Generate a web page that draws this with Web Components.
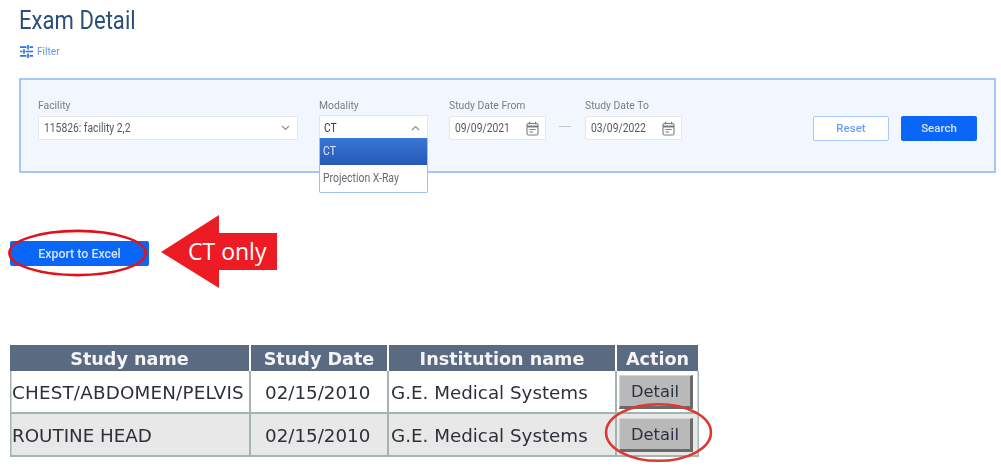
<!DOCTYPE html>
<html>
<head>
<meta charset="utf-8">
<title>Exam Detail</title>
<style>
  html, body { margin: 0; background: #fff; }
  body { width: 1001px; height: 468px; overflow: hidden; font-family: Roboto, "Liberation Sans", sans-serif; }
</style>
</head>
<body>
<exam-page>
  <page-title slot="head">Exam Detail</page-title>
  <filter-toggle slot="head">Filter</filter-toggle>

  <filter-panel slot="filter">
    <select-field label="Facility" value="115826: facility 2,2" style="--w:260px"></select-field>
    <select-field label="Modality" value="CT" open style="--w:109px;--ml:21px">
      <option-item selected>CT</option-item>
      <option-item>Projection X-Ray</option-item>
    </select-field>
    <date-field label="Study Date From" value="09/09/2021" style="--ml:21px"></date-field>
    <date-field label="Study Date To" value="03/09/2022" dash style="--ml:39px"></date-field>
    <app-button slot="actions" kind="outline">Reset</app-button>
    <app-button slot="actions" kind="solid">Search</app-button>
  </filter-panel>

  <export-row slot="export">
    <ring-mark style="--t:-11px;--r:2px;--b:-10px;--l:-2px;--sw:2.6;--c:#e0131d">
      <app-button kind="solid" style="--bw:139px;--bh:25px;--fs:12.4px;--pt:1px">Export to Excel</app-button>
    </ring-mark>
    <callout-arrow>CT only</callout-arrow>
  </export-row>

  <study-table slot="table">
    <study-head>
      <span>Study name</span><span>Study Date</span><span>Institution name</span><span>Action</span>
    </study-head>
    <study-row>
      <span style="letter-spacing:.2px">CHEST/ABDOMEN/PELVIS</span><span>02/15/2010</span><span>G.E. Medical Systems</span>
      <detail-button>Detail</detail-button>
    </study-row>
    <study-row alt>
      <span>ROUTINE HEAD</span><span>02/15/2010</span><span>G.E. Medical Systems</span>
      <ring-mark style="--t:-15px;--r:-19px;--b:-10px;--l:-14px;--sw:2.6;--c:#dc3a30">
        <detail-button>Detail</detail-button>
      </ring-mark>
    </study-row>
  </study-table>
</exam-page>

<script>
  const def = (name, html, setup) => {
    customElements.define(name, class extends HTMLElement {
      constructor() {
        super();
        this.attachShadow({ mode: "open" });
        this.shadowRoot.innerHTML = html;
      }
      connectedCallback() {
        if (setup) setup(this, this.shadowRoot);
      }
    });
  };

  // the reference is a squeezed, soft screenshot, so text is narrowed and blurred a bit
  const squeeze = (x) => `display: block; width: max-content; transform: scaleX(${x}); transform-origin: 0 50%; filter: blur(.45px); white-space: nowrap;`;

  def("exam-page", `
    <style>
      :host { display: block; width: 1001px; }
      .head { padding: 6px 0 0 19px; height: 78px; box-sizing: border-box; }
      .filter { padding-left: 19px; }
      .export { padding: 68px 0 0 10px; }
      .table { padding: 79px 0 0 10px; }
    </style>
    <div class="head"><slot name="head"></slot></div>
    <div class="filter"><slot name="filter"></slot></div>
    <div class="export"><slot name="export"></slot></div>
    <div class="table"><slot name="table"></slot></div>
  `);

  def("page-title", `
    <style>
      :host { display: block; font: 400 26px/28px Roboto, sans-serif; color: #2c4f78; }
      span { ${squeeze(.85)} }
    </style>
    <span><slot></slot></span>
  `);

  def("filter-toggle", `
    <style>
      :host { display: flex; align-items: center; gap: 4px; margin: 9px 0 0 1px; height: 16px; font: 400 11.5px/16px Roboto, sans-serif; color: #5b97f5; }
      svg { width: 13px; height: 13px; filter: blur(.35px); }
      span { ${squeeze(.88)} }
    </style>
    <svg viewBox="0 0 13 13" fill="none" stroke="#2a74ea" stroke-width="1.7">
      <path d="M0 2.2h6.5M9.5 2.2H13M0 6.5h2.5M5.5 6.5H13M0 10.8h6.5M9.5 10.8H13"/>
      <path d="M8 0v4.4M4 4.3v4.4M8 8.6V13"/>
    </svg>
    <span><slot></slot></span>
  `);

  def("filter-panel", `
    <style>
      :host { display: block; width: 977px; height: 95px; box-sizing: border-box; background: #f2f6fe; border: 2px solid #a6c6f9; }
      .wrap { display: flex; align-items: flex-start; padding: 18px 17px 0 17px; }
      .fields { display: flex; align-items: flex-start; }
      .actions { display: flex; gap: 12px; margin-left: auto; padding-top: 18px; }
    </style>
    <div class="wrap">
      <div class="fields"><slot></slot></div>
      <div class="actions"><slot name="actions"></slot></div>
    </div>
  `);

  const fieldStyle = `
    :host { display: block; position: relative; margin-left: var(--ml, 0); width: var(--w, 97px); }
    label { height: 18px; font: 400 11.5px/14px Roboto, sans-serif; color: #777d85; ${squeeze(.9)} }
    .box { display: flex; align-items: center; justify-content: space-between; box-sizing: border-box; height: 24px; padding: 0 0 0 5px; background: #fff; border: 1px solid #e4e6ea; font: 400 12px/22px Roboto, sans-serif; color: #555a60; }
    .box span { ${squeeze(.86)} }
    .box svg { margin-right: 6px; }
  `;

  def("select-field", `
    <style>
      ${fieldStyle}
      .box svg { width: 9px; height: 6px; margin-right: 7px; }
      :host([open]) .box { margin-top: -1px; border-bottom: 0; padding-left: 4px; color: #3b4046; }
      .menu { display: none; position: absolute; left: 0; right: 0; top: 40px; z-index: 2; background: #fff; border: 1.5px solid #9dbff5; border-top: 0; border-radius: 0 0 2px 2px; box-sizing: border-box; }
      :host([open]) .menu { display: block; }
    </style>
    <label></label>
    <div class="box"><span></span>
      <svg viewBox="0 0 9 6" fill="none" stroke="#8b9096" stroke-width="1.2"><path d="M1 1l3.5 3.5L8 1"/></svg>
    </div>
    <div class="menu"><slot></slot></div>
  `, (el, root) => {
    root.querySelector("label").textContent = el.getAttribute("label");
    root.querySelector(".box span").textContent = el.getAttribute("value");
    if (el.hasAttribute("open")) root.querySelector(".box path").setAttribute("d", "M1 5l3.5-3.5L8 5");
  });

  def("option-item", `
    <style>
      :host { display: block; height: 27px; padding-left: 3px; font: 400 12px/27px Roboto, sans-serif; color: #666b72; }
      :host([selected]) { color: #dfe8fa; background: linear-gradient(#3a77d8, #2559b4); }
      span { ${squeeze(.87)} }
    </style>
    <span><slot></slot></span>
  `);

  def("date-field", `
    <style>
      ${fieldStyle}
      .box svg { width: 13px; height: 15px; flex: none; }
      .dash { display: none; position: absolute; left: -26px; top: 28px; width: 12px; height: 1px; background: #c2c5ca; }
      :host([dash]) .dash { display: block; }
    </style>
    <label></label>
    <div class="box"><span></span>
      <svg viewBox="0 0 13 15" fill="none" stroke="#777c82" stroke-width="1.1">
        <rect x="1" y="2.5" width="11" height="11.5" rx="1.5"/>
        <path d="M1 5.5h11" stroke-width="2"/>
        <path d="M3.5 .8v2.5M9.5 .8v2.5M3.5 8.5h6M3.5 11h3.5"/>
      </svg>
    </div>
    <i class="dash"></i>
  `, (el, root) => {
    root.querySelector("label").textContent = el.getAttribute("label");
    root.querySelector(".box span").textContent = el.getAttribute("value");
  });

  def("app-button", `
    <style>
      :host { display: block; }
      div { display: flex; align-items: center; justify-content: center; box-sizing: border-box; width: var(--bw, 76px); height: var(--bh, 25px); padding-top: var(--pt, 0); border-radius: 2px; font: 500 var(--fs, 11.5px)/1 Roboto, sans-serif; }
      :host([kind=solid]) div { background: #0a66f7; color: #d6e4fd; }
      :host([kind=outline]) div { background: #fff; border: 1.5px solid #a9c8fb; color: #6f9ff4; }
      span { filter: blur(.45px); white-space: nowrap; }
    </style>
    <div><span><slot></slot></span></div>
  `);

  def("export-row", `
    <style>
      :host { display: flex; align-items: center; height: 25px; gap: 12px; }
    </style>
    <slot></slot>
  `);

  def("ring-mark", `
    <style>
      :host { display: block; position: relative; }
      svg { position: absolute; top: var(--t); right: var(--r); bottom: var(--b); left: var(--l); width: calc(100% - var(--l) - var(--r)); height: calc(100% - var(--t) - var(--b)); overflow: visible; pointer-events: none; z-index: 3; filter: blur(.35px); }
      ellipse { fill: none; stroke: var(--c); stroke-width: var(--sw); vector-effect: non-scaling-stroke; }
    </style>
    <slot></slot>
    <svg viewBox="0 0 100 100" preserveAspectRatio="none"><ellipse cx="50" cy="50" rx="49" ry="48"/></svg>
  `);

  def("callout-arrow", `
    <style>
      :host { display: block; position: relative; width: 116px; height: 73px; top: -2px; }
      svg { position: absolute; inset: 0; width: 116px; height: 73px; }
      span { position: absolute; left: 27px; top: 18px; width: 80px; height: 37px; font: 400 23px/37px "Open Sans", "Noto Sans", sans-serif; color: #fff; white-space: nowrap; }
    </style>
    <svg viewBox="0 0 116 73"><path fill="#ed1c24" d="M0 37 58 0V18H116V55H58V73Z"/></svg>
    <span><slot></slot></span>
  `);

  def("study-table", `
    <style>
      :host { display: block; width: 689px; --cols: 241px 138px 228px 82px; }
    </style>
    <slot></slot>
  `);

  def("study-head", `
    <style>
      :host { display: grid; grid-template-columns: var(--cols); height: 26px; }
      ::slotted(span) { display: block; box-sizing: border-box; height: 26px; padding-top: 2px; background: #5a6a80; margin-right: 2px; text-align: center; font: 700 17.6px/24px "DejaVu Sans", Verdana, sans-serif; color: #f4f5f6; white-space: nowrap; filter: blur(.45px); }
      ::slotted(span:last-child) { margin-right: 1px; }
    </style>
    <slot></slot>
  `);

  def("study-row", `
    <style>
      :host { display: grid; grid-template-columns: var(--cols); height: 43px; box-sizing: border-box; background: #fff; box-shadow: inset 1.5px 0 #a3b5b0, inset -1.5px 0 #a3b5b0; border-bottom: 2px solid #a3b5b0; }
      :host([alt]) { background: #e8e8e8; }
      ::slotted(span) { display: block; box-sizing: border-box; height: 41px; font: 400 18.3px/43px "DejaVu Sans", Verdana, sans-serif; color: #2c3038; white-space: nowrap; padding-left: 2px; border-right: 2px solid #a3b5b0; filter: blur(.45px); }
      ::slotted(span:nth-child(2)) { padding-left: 14px; }
      ::slotted(:last-child) { justify-self: start; align-self: start; margin: 4px 0 0 2px; }
    </style>
    <slot></slot>
  `);

  def("detail-button", `
    <style>
      :host { display: block; }
      div { width: 74px; height: 34px; box-sizing: border-box; background: #b9b9b9; border-style: solid; border-width: 1.5px 3px 3px 1.5px; border-color: #d4d4d4 #6a6a6a #6a6a6a #d4d4d4; text-align: center; font: 400 16.3px/31px "DejaVu Sans", Verdana, sans-serif; color: #2c3340; }
      span { filter: blur(.45px); display: inline-block; }
    </style>
    <div><span><slot></slot></span></div>
  `);
</script>
</body>
</html>
